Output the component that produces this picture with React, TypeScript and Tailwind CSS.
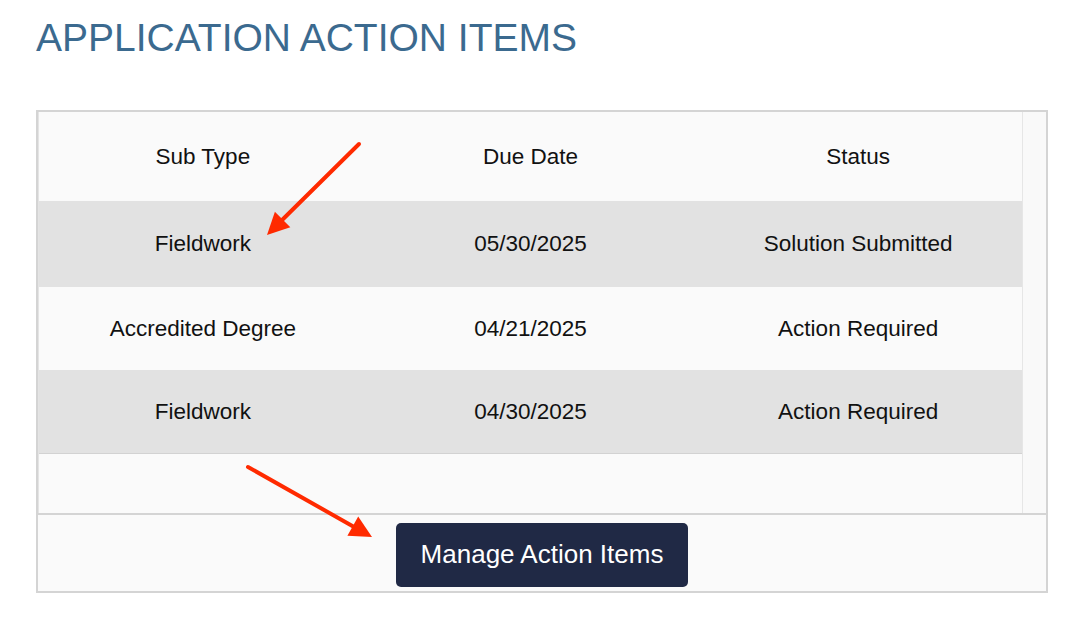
import React from 'react';

interface ActionItem {
  subType: string;
  dueDate: string;
  status: string;
}

const items: ActionItem[] = [
  { subType: 'Fieldwork', dueDate: '05/30/2025', status: 'Solution Submitted' },
  { subType: 'Accredited Degree', dueDate: '04/21/2025', status: 'Action Required' },
  { subType: 'Fieldwork', dueDate: '04/30/2025', status: 'Action Required' },
];

const rowHeights = ['h-[86px]', 'h-[83px]', 'h-[84px] border-b border-[#d2d2d2]'];

const App: React.FC = () => {
  return (
    <div
      className="relative w-[1091px] h-[620px] bg-white pl-[36px] pt-[18px]"
      style={{ fontFamily: '"Liberation Sans", Arial, sans-serif' }}
    >
      {/* Title */}
      <h1 className="text-[39px] leading-[39px] text-[#3b6a8f]">
        APPLICATION ACTION ITEMS
      </h1>

      {/* Card */}
      <div className="mt-[53px] w-[1012px] border-2 border-[#d4d4d4] bg-[#fafafa]">
        <div className="flex h-[401px]">
          <div className="flex-1 border-l border-[#e4e4e4] flex flex-col">
            <div className="grid grid-cols-3 h-[89px] items-center text-center text-[22.5px] text-[#111] bg-[#fafafa]">
              <div>Sub Type</div>
              <div>Due Date</div>
              <div>Status</div>
            </div>
            {items.map((item, i) => (
              <div
                key={i}
                className={`grid grid-cols-3 items-center text-center text-[22.5px] text-[#111] ${
                  i % 2 === 0 ? 'bg-[#e2e2e2]' : 'bg-[#fafafa]'
                } ${rowHeights[i]}`}
              >
                <div>{item.subType}</div>
                <div>{item.dueDate}</div>
                <div>{item.status}</div>
              </div>
            ))}
            <div className="flex-1 bg-[#fafafa]" />
          </div>
          {/* scrollbar track */}
          <div className="w-[24px] border-l border-[#e6e6e6] bg-[#f9f9f9]" />
        </div>

        {/* Footer */}
        <div className="h-[78px] border-t-2 border-[#d4d4d4] flex items-center justify-center">
          <button className="w-[292px] h-[64px] rounded-[5px] bg-[#202945] text-white text-[26px] mt-[3px]">
            Manage Action Items
          </button>
        </div>
      </div>

      {/* Annotation arrows */}
      <svg className="absolute left-0 top-0 pointer-events-none" width="1091" height="620">
        <line x1="359" y1="144" x2="282.6" y2="219.5" stroke="#ff2a00" strokeWidth="4" strokeLinecap="round" />
        <polygon points="267,235 290.3,227.3 274.9,211.7" fill="#ff2a00" />
        <line x1="248" y1="467" x2="352.8" y2="526.2" stroke="#ff2a00" strokeWidth="4" strokeLinecap="round" />
        <polygon points="372,537 347.4,535.8 358.2,516.6" fill="#ff2a00" />
      </svg>
    </div>
  );
};

export default App;
